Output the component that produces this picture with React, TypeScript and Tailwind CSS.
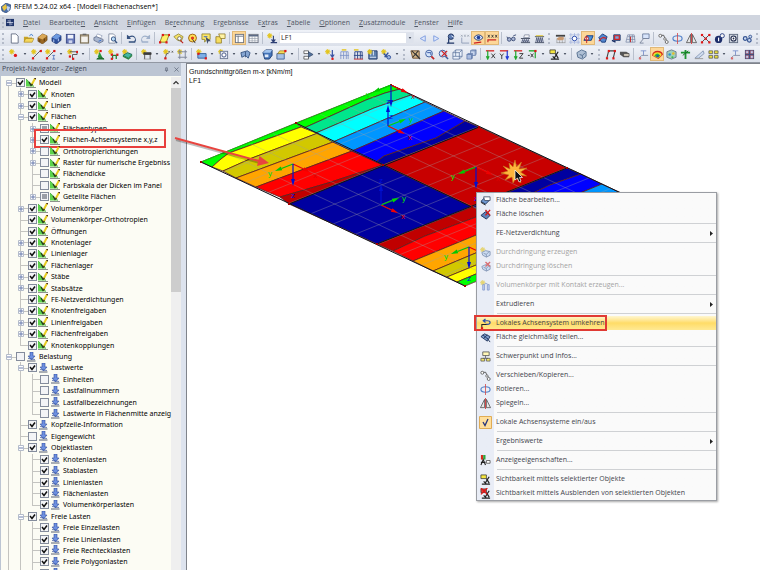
import React from "react";
import clsx from "clsx";

/* ---------- icons (12 x 12 grid) ---------- */

const node = (x: number, y: number, fill = "#e01818") => (
  <rect x={x - 1} y={y - 1} width="2.4" height="2.4" fill={fill} />
);

const spark = (
  <path d="M3 0v6M0 3h6M1 1l4 4M5 1L1 5" stroke="#e3c41c" strokeWidth="1.1" />
);

const icons: Record<string, React.ReactNode> = {
  // file toolbar
  newFile: <path d="M2.5 1h5l2.5 2.5V11h-7.5z" fill="#fff" stroke="#59637a" strokeWidth=".9" />,
  open: (
    <>
      <path d="M1 10V4h4l1 1h4v5z" fill="#c9a526" />
      <path d="M1 10l2-4h9l-2 4z" fill="#f5d75b" stroke="#94731a" strokeWidth=".5" />
      <path d="M7 3q2-3 4 0" fill="none" stroke="#2d72c8" />
    </>
  ),
  brownBlock: (
    <>
      <path d="M1 5l5-4 5 2v5l-5 4-5-3z" fill="#9a6824" stroke="#5d3908" strokeWidth=".6" />
      <path d="M1 5l5-4 5 2-5 4z" fill="#dba957" />
      <path d="M3 7v3M8 6v3" stroke="#5d3908" />
    </>
  ),
  blueBlock: (
    <>
      <path d="M1 5l5-4 5 2v5l-5 4-5-3z" fill="#2c4f9b" stroke="#152a62" strokeWidth=".6" />
      <path d="M1 5l5-4 5 2-5 4z" fill="#6f9be0" />
      <path d="M3 7v3M8 6v3" stroke="#c8dcff" />
    </>
  ),
  save: (
    <>
      <rect x="1.5" y="1.5" width="9" height="9.5" fill="#6577b8" stroke="#3b4a86" />
      <rect x="3" y="2" width="6" height="4" fill="#eef1fa" />
      <rect x="4" y="8" width="4" height="3" fill="#cfd6ee" />
    </>
  ),
  clipboard: (
    <>
      <rect x="1.5" y="2" width="9" height="9" fill="#b2a48c" stroke="#75684f" />
      <rect x="2.5" y="4" width="7" height="6" fill="#f4f2ee" />
      <path d="M4 1.5h4" stroke="#666" strokeWidth="1.5" />
    </>
  ),
  print: (
    <>
      <path d="M3 4l2-3 5 2-2 3z" fill="#fff" stroke="#7483a3" strokeWidth=".6" />
      <path d="M1 5l3-1 7 3v2l-4 2-6-3z" fill="#aab7cf" stroke="#4e5b78" strokeWidth=".7" />
      <path d="M6 9l3-1" stroke="#3268c8" />
    </>
  ),
  preview: (
    <>
      <path d="M2 1h5l2 2v8H2z" fill="#fff" stroke="#6d7891" strokeWidth=".8" />
      <circle cx="7" cy="6.5" r="2.3" fill="#b9dcf8" stroke="#33507f" />
      <path d="M8.5 8l2.5 3" stroke="#33507f" strokeWidth="1.4" />
    </>
  ),
  undo: <path d="M1 2v4.5h4.5L4 5q3-2 5 0t0 4H3v1.5h7q2-3 0-6T3.5 3.5z" fill="#35517f" />,
  redo: <path d="M11 2v4.5H6.5L8 5Q5 3 3 5t0 4h6v1.5H2Q0 7.5 2 4.5t6.5-1z" fill="#9fb0ca" />,
  plane: (
    <>
      <path d="M4 2h7L8 10H1z" fill="#fff06a" stroke="#8c8320" />
      {node(4, 2)}
      {node(11, 2)}
      {node(1, 10)}
      {node(8, 10)}
    </>
  ),
  zoomYellow: (
    <>
      <path d="M1 4l5-3 5 3-2 5-4-1z" fill="#f7e468" stroke="#8a7c25" strokeWidth=".8" />
      <circle cx="7" cy="6" r="2" fill="#fff" stroke="#555" strokeWidth=".8" />
      <path d="M8 8l3 3" stroke="#c02020" strokeWidth="1.3" />
    </>
  ),
  target: (
    <>
      <circle cx="6" cy="5.5" r="4.3" fill="#ffe258" stroke="#9a5f10" />
      <circle cx="6" cy="5.5" r="1.8" fill="#e03a1e" />
      <path d="M6 7l3 4" stroke="#333" />
    </>
  ),
  note: (
    <>
      <path d="M1 1h9v6H6l-2 3V7H1z" fill="#fbe66a" stroke="#87791e" strokeWidth=".8" />
      <path d="M5 4l6 5-3 0-1 3z" fill="#3e4c6b" />
      <path d="M3 4h4" stroke="#3f68c4" />
    </>
  ),
  folderDoc: (
    <>
      <path d="M1 4h6v7H1z" fill="#f6dd5f" stroke="#8b7420" strokeWidth=".8" />
      <path d="M4 1h7v5H6z" fill="#fff3a5" stroke="#8b7420" strokeWidth=".8" />
    </>
  ),
  table: (
    <>
      <rect x="1.5" y="1.5" width="9" height="9" fill="#fff" stroke="#6b7280" />
      <path d="M2 3.5h8M4.5 3v8" stroke="#6b7280" />
    </>
  ),
  grid: (
    <>
      <rect x="1" y="1.5" width="10" height="9" fill="#f8f8f8" stroke="#6b7280" />
      <path d="M1 3h10" stroke="#51607e" strokeWidth="1.5" />
      <path d="M1 6h10M1 8.5h10M4.5 3v8M7.5 3v8" stroke="#8992a3" strokeWidth=".6" />
    </>
  ),
  loadNew: (
    <>
      {spark}
      <path d="M7 3v6M5 7l2 3 2-3M4 10.5h7" fill="none" stroke="#2d3f74" strokeWidth="1.2" />
    </>
  ),
  prev: <path d="M9 3L3.5 6 9 9z" fill="#dfe8fb" stroke="#7c9be0" />,
  next: <path d="M3 3l5.5 3L3 9z" fill="#dfe8fb" stroke="#7c9be0" />,
  flag: (
    <>
      <circle cx="6.5" cy="4" r="3" fill="#5b79b0" stroke="#20345f" />
      <path d="M2 11h8M4 11V6" stroke="#1e3566" strokeWidth="1.3" />
      <path d="M7 3l3 2" stroke="#e8eefc" />
    </>
  ),
  values: (
    <>
      <path d="M2 2l2 2M4 2L2 4M5.5 2l2 2m0-2l-2 2M9 2l2 2m0-2L9 4" stroke="#8e97a8" strokeWidth=".7" />
      <path d="M3 5v6h8" fill="none" stroke="#8f9db8" />
    </>
  ),
  eye: (
    <>
      <path d="M1 5q5-6 10 0-5 6-10 0z" fill="#dbe6ff" stroke="#1d3670" />
      <circle cx="6" cy="5" r="2" fill="#1d3f9c" />
      <path d="M1 11l8-1" stroke="#d02020" strokeWidth="1.2" />
    </>
  ),
  xxx: (
    <>
      <path d="M1 2l2 3m0-3L1 5M5 2l2 3m0-3L5 5M9 2l2 3m0-3L9 5" stroke="#333" strokeWidth=".9" />
      <path d="M1 10V7.5h9" fill="none" stroke="#c82424" strokeWidth="1.2" />
    </>
  ),
  glasses: (
    <>
      <circle cx="3.5" cy="7" r="2" fill="#aab7d6" stroke="#3b4b75" />
      <circle cx="8" cy="6.5" r="2" fill="#aab7d6" stroke="#3b4b75" />
      <path d="M1 4l1 2M8 3l3-1" stroke="#3b4b75" />
    </>
  ),
  support: (
    <>
      <path d="M1 6h10M1 10.5h10" stroke="#444d60" />
      <path d="M2 10l1-3 1 3 1-3 1 3 1-3 1 3 1-3 1 3" fill="none" stroke="#3e486b" strokeWidth=".8" />
      <path d="M4 5l1-3h5v3z" fill="#f8f8f8" stroke="#6c7690" strokeWidth=".7" />
    </>
  ),
  supportPlain: (
    <>
      <path d="M1 4h10M1 10.5h10" stroke="#444d60" />
      <path d="M2 10l1-5 1 5 1-5 1 5 1-5 1 5 1-5 1 5" fill="none" stroke="#3e486b" strokeWidth=".8" />
      <path d="M2 3h8" stroke="#e3c41c" />
    </>
  ),
  hand: (
    <>
      <path d="M1 2h10v2H1z" fill="#444" />
      <path d="M2 6q3-3 8-1l-1 3H3z" fill="#c99a71" />
      <path d="M2 6v5M5 8v3M8 8v3M11 5v6M2 10.5h9" stroke="#888" strokeWidth=".6" />
    </>
  ),
  snap: (
    <>
      <path d="M2 0v12M6 0v12M10 0v12M0 2h12M0 6h12M0 10h12" stroke="#9fb0dc" strokeWidth=".7" />
      <circle cx="6" cy="6" r="2.5" fill="#fff" stroke="#2446ab" />
    </>
  ),
  modelA: (
    <>
      <path d="M1 8l3-5h7l-2 5z" fill="#4e94d8" stroke="#123b86" />
      <circle cx="4" cy="6" r="2" fill="#fff" stroke="#c02020" />
      <path d="M4 3v8" stroke="#c02020" />
    </>
  ),
  modelB: (
    <>
      <path d="M2 5l4-4 5 3-2 6H5z" fill="#5287cf" stroke="#173a7b" />
      <path d="M2 9q4-6 8-3" fill="none" stroke="#d32222" strokeWidth="1.3" />
    </>
  ),
  modelC: (
    <>
      <path d="M3 2h7v6H3z" fill="#7ba5dd" stroke="#1b3265" />
      <path d="M4 3h5v4H4z" fill="none" stroke="#d32222" strokeWidth="1.3" />
      <path d="M1 8l4 2" stroke="#172d63" strokeWidth="1.5" />
    </>
  ),
  mesh: (
    <>
      <path d="M1 10L3 2h7l1 8zM2 7h9M3 4h8M5 2v8M8 2v8" fill="none" stroke="#7a88a6" strokeWidth=".8" />
      <path d="M6 4v6" stroke="#c52222" />
    </>
  ),
  wireTag: (
    <>
      <path d="M4 1h7v5H4z" fill="#d7e4fb" stroke="#56688f" strokeWidth=".8" />
      <path d="M1 11l4-5h4M1 11h4" fill="none" stroke="#7c879d" />
    </>
  ),
  move: (
    <>
      <circle cx="2.5" cy="3" r="1.6" fill="#fff" stroke="#444" strokeWidth=".8" />
      <path d="M4 2.5q3-1 3 2l2 3" fill="none" stroke="#444" strokeWidth=".9" />
      <circle cx="7.5" cy="6.5" r="1.3" fill="#fff" stroke="#444" strokeWidth=".7" />
      <circle cx="9.5" cy="9.8" r="1.6" fill="#fff" stroke="#444" strokeWidth=".8" />
    </>
  ),
  rotate: (
    <>
      <ellipse cx="6" cy="6" rx="5" ry="3" fill="none" stroke="#4e7fc9" strokeWidth="1.2" />
      <path d="M6 0v12" stroke="#d34a4a" strokeWidth=".9" />
    </>
  ),
  mirror: (
    <>
      <path d="M5 1.5v9H.5zM7 1.5v9h4.5z" fill="#e7e7e7" stroke="#444" strokeWidth=".8" />
      <path d="M6 0v12" stroke="#d02c2c" strokeWidth=".9" />
    </>
  ),
  cross: (
    <>
      <path d="M1.5 1.5l9 9M10.5 1.5l-9 9" stroke="#444" />
      {node(2, 2)}
      {node(10, 2)}
      {node(6, 6)}
      {node(2, 10)}
      {node(10, 10)}
    </>
  ),
  info: (
    <>
      <circle cx="5" cy="7" r="4" fill="#1e2f6b" />
      <circle cx="9" cy="3" r="2.3" fill="#f6f6f6" stroke="#263c80" />
      <path d="M5 5v4" stroke="#fff" strokeWidth="1.3" />
    </>
  ),
  camera: (
    <>
      <rect x="1.5" y="1.5" width="9" height="9" fill="#cfd5df" stroke="#636e82" />
      <circle cx="6" cy="6" r="2.8" fill="#fff" stroke="#1d2748" strokeWidth="1.2" />
      <circle cx="6" cy="6" r="1" fill="#1d2748" />
    </>
  ),
  gears: (
    <>
      <circle cx="3.5" cy="6" r="2" fill="#cddcf4" stroke="#345391" strokeWidth="1.3" />
      <circle cx="8" cy="8" r="2" fill="#cddcf4" stroke="#345391" strokeWidth="1.3" />
      <circle cx="9" cy="4" r="1.6" fill="#cddcf4" stroke="#345391" />
    </>
  ),

  // model toolbar
  node: (
    <>
      {spark}
      <circle cx="7" cy="7" r="1.8" fill="#e01818" />
    </>
  ),
  line: (
    <>
      {spark}
      <path d="M1 11L11 1" stroke="#555" />
      {node(2, 10)}
      {node(10.5, 2)}
    </>
  ),
  lineDim: (
    <>
      {spark}
      <path d="M1 11L10 2" stroke="#555" />
      {node(2, 10)}
      {node(10, 2)}
      <path d="M8 7h3M9.5 7v4M8 11h3" stroke="#3c62b8" strokeWidth=".8" />
    </>
  ),
  polyline: (
    <>
      {spark}
      <path d="M3 3h8v3H6v5" fill="none" stroke="#555" />
      {node(11, 3)}
      {node(3, 8)}
      {node(6.5, 10.5)}
    </>
  ),
  nodeSupport: (
    <>
      {spark}
      <path d="M6 3l3 6H4z" fill="#27963c" />
      <path d="M3 11q4-4 8 0z" fill="#1c6e2c" stroke="#1c6e2c" />
      {node(7, 2)}
    </>
  ),
  lineSupport: (
    <>
      {spark}
      <path d="M4 7h7M5 7v4M9 7v4" stroke="#1f8634" strokeWidth="1.4" />
      {node(4, 6)}
      {node(10, 6)}
      {node(4, 10.5)}
    </>
  ),
  surfSupport: (
    <>
      {spark}
      <path d="M1 7l5-3 5 2-4 4z" fill="#43b9a0" stroke="#1b6a4c" />
      <path d="M1 8l6 3 4-4" fill="none" stroke="#24843c" strokeWidth="1.3" />
    </>
  ),
  section: (
    <>
      {spark}
      <path d="M3 4h8v2H3zM4 6v5M10 6v5" fill="#3c3c3c" stroke="#3c3c3c" strokeWidth=".9" />
      <path d="M3 11h8" stroke="#888" strokeWidth=".7" />
    </>
  ),
  label: (
    <>
      {spark}
      <path d="M2 11l2-6h2" fill="none" stroke="#555" />
      <path d="M6 2l1.5 2M7.5 2L6 4M9.5 2L11 4M11 2L9.5 4" stroke="#555" strokeWidth=".8" />
      {node(2.5, 10)}
    </>
  ),
  frame: (
    <>
      {spark}
      <path d="M3 1v10M9 1v10M1 3h10M1 9h10" stroke="#7d8698" />
    </>
  ),
  rectNew: (
    <>
      {spark}
      <path d="M2 5h9v5H2z" fill="#7eafe8" stroke="#34629c" />
      {node(2.5, 5)}
      {node(10.5, 10)}
    </>
  ),
  opening: (
    <>
      {spark}
      <rect x="2.5" y="2.5" width="8" height="8" fill="#e8edf8" stroke="#6c7894" />
      <circle cx="6.5" cy="6.5" r="2.3" fill="#fff" stroke="#3a4d7d" />
    </>
  ),
  tube: (
    <>
      <path d="M1 4l7-2 3 2-2 6-3-3-4 2z" fill="#86a6d2" stroke="#395783" />
      <path d="M6 3v6" stroke="#395783" />
    </>
  ),
  box: (
    <>
      <path d="M1 4l3-3h7v6l-3 4H3z" fill="#4373b8" stroke="#1f3e73" />
      <path d="M1 4l3-3h7L9 4z" fill="#a2c4ee" />
      <path d="M3 6h4v3H3z" fill="#dfeafa" />
    </>
  ),
  solidNew: (
    <>
      <path d="M1 5h8v6H1z" fill="#a7c1e6" stroke="#466797" />
      <path d="M2 5l2-3h7L9 5z" fill="#f5db57" stroke="#8e761c" strokeWidth=".7" />
      {node(10, 2)}
    </>
  ),
  member: (
    <>
      <path d="M1 2h5v3H1zM1 8h5v3H1z" fill="#fff" stroke="#444" strokeWidth=".8" />
      <path d="M6 3l5 3-5 3z" fill="#54739c" stroke="#2b3f60" strokeWidth=".7" />
    </>
  ),
  load: (
    <>
      {spark}
      <path d="M8 1v7M6 6l2 3 2-3" fill="none" stroke="#3651a2" strokeWidth="1.3" />
      {node(8, 10.5)}
    </>
  ),
  loadMesh: (
    <>
      <path d="M2 3h8v8M2 3v8M5 3v8M8 3v8M1 7h10" fill="none" stroke="#7d92c6" strokeWidth=".9" />
      <path d="M3 1h5" stroke="#e3c41c" strokeWidth="1.5" />
    </>
  ),
  loadMeshDark: (
    <>
      <path d="M2 3h8v8M2 3v8M5 3v8M8 3v8M1 7h10" fill="none" stroke="#2e4788" />
      <path d="M1 1h5" stroke="#e3c41c" strokeWidth="1.5" />
      <path d="M1 11h10" stroke="#c42a2a" />
    </>
  ),
  loadSolid: (
    <>
      <path d="M2 2h9v9H2z" fill="#5d7fae" stroke="#223a68" />
      <path d="M4 2v5M7 2v5M3 9h7" stroke="#e2ecfb" />
      {spark}
    </>
  ),
  loadFree: (
    <>
      {spark}
      <path d="M3 5l5 5M4 9l4-5" stroke="#35539b" strokeWidth="1.6" />
      <circle cx="8.5" cy="9" r="2" fill="#98b1de" stroke="#35539b" />
    </>
  ),
  picker: (
    <>
      <path d="M1 2h9v8H3z" fill="#d6b98c" stroke="#6b4b2d" />
      <path d="M2 2l8 8M9 2L3 9M6 5l5 6" stroke="#343434" strokeWidth="1.2" />
    </>
  ),
  zoomIn: (
    <>
      <circle cx="5.5" cy="5" r="3.7" fill="#d6e6fb" stroke="#3a5b9c" />
      <path d="M8 8l3 3" stroke="#c02626" strokeWidth="1.8" />
      <path d="M3.5 4h4v2.5" stroke="#2f4fa0" />
    </>
  ),
  zoomOff: (
    <>
      <circle cx="5" cy="5" r="3.7" fill="#d6e6fb" stroke="#3a5b9c" />
      <path d="M8 8l3 3" stroke="#3a5b9c" strokeWidth="1.6" />
      <path d="M4 2l6 6M10 2L4 8" stroke="#d02020" strokeWidth="1.3" />
    </>
  ),
  cube: (
    <path d="M1 4l3-3h7v7l-3 3H1zM1 4h7l3-3M8 4v7M4 1v7H1M4 8h7" fill="#eaf1fb" stroke="#587099" strokeWidth=".8" />
  ),
  cubes: (
    <>
      <path d="M5 2l1-1h5v5l-1 1H5zM5 2h5v5M10 2l1-1" fill="#c9d6ee" stroke="#5b74a5" strokeWidth=".8" />
      <path d="M1 6l1-1h5v5l-1 1H1zM1 6h5v5M6 6l1-1" fill="#a9bce0" stroke="#5b74a5" strokeWidth=".8" />
    </>
  ),
  axX: (
    <>
      <path d="M1 2h9" stroke="#d42020" strokeWidth="1.4" />
      <path d="M3 2v8M1.5 8L3 11l1.5-3" fill="none" stroke="#21a82e" strokeWidth="1.3" />
      <path d="M7 5l4 5M11 5l-4 5" stroke="#333" />
    </>
  ),
  axY: (
    <>
      <path d="M1 2h9" stroke="#d42020" strokeWidth="1.4" />
      <path d="M9 2v8M7.5 8L9 11l1.5-3" fill="none" stroke="#2038d8" strokeWidth="1.3" />
      <path d="M1 5l2 2.5L5 5M3 7.5V11" fill="none" stroke="#333" />
    </>
  ),
  axZ: (
    <>
      <path d="M1 2h9" stroke="#d42020" strokeWidth="1.4" />
      <path d="M3 2v8M1.5 8L3 11l1.5-3" fill="none" stroke="#21a82e" strokeWidth="1.3" />
      <path d="M7 5h4l-4 5h4" fill="none" stroke="#333" />
    </>
  ),
  axNeg: (
    <>
      <path d="M2 2h8" stroke="#21a82e" strokeWidth="1.5" />
      <path d="M9 2v8" stroke="#21a82e" strokeWidth="1.3" />
      <path d="M1 7h2M4 5l3 4M7 5L4 9" stroke="#333" />
      {node(9, 2)}
    </>
  ),
  visibility: (
    <>
      <path d="M1 1h6v4H1z" fill="#f4e53e" stroke="#333" strokeWidth=".8" />
      <path d="M2 11h9M5 11l5-8M7 5l3 5M4 8l3 3" stroke="#222" strokeWidth="1.3" />
    </>
  ),
  visibilityOff: (
    <>
      <path d="M1 1h6v4H1z" fill="#e8443c" stroke="#333" strokeWidth=".8" />
      <path d="M2 11h9M5 11l5-8M7 5l3 5M4 8l3 3" stroke="#222" strokeWidth="1.3" />
      <path d="M1 0l7 7M8 0L1 7" stroke="#e01818" strokeWidth="1.4" />
    </>
  ),
  solid: (
    <>
      <path d="M1 4l5-3 5 2v5l-4 3-5-2z" fill="#aebfd4" stroke="#55708f" />
      <path d="M4 6l3 1 3-3M7 7v3" fill="none" stroke="#55708f" />
    </>
  ),
  portal: (
    <>
      <path d="M2 10L4 2h7L9 10" fill="none" stroke="#444" strokeWidth="1.2" />
      {node(4, 2)}
      {node(10.5, 2)}
      {node(2, 10)}
      {node(9, 10)}
    </>
  ),
  beam: (
    <>
      <path d="M1 3h7l3 2v4H5L1 6z" fill="#555" />
      <path d="M5 5h6v3H5z" fill="#d8cfbf" stroke="#333" strokeWidth=".6" />
    </>
  ),
  resultLine: (
    <>
      <path d="M3 2h6M6 2v5" stroke="#7d93cd" />
      <path d="M1 10l3-3h7" fill="none" stroke="#8692a8" />
      {node(2, 10, "#da6a6a")}
    </>
  ),
  rainbow: (
    <>
      <path d="M0 7q1-5 6-5t6 4l-5 5z" fill="#d62a1c" />
      <path d="M1 7q1-3.5 5-3.5t4.5 3L7 10z" fill="#f3dd2a" />
      <path d="M2.5 7.5Q4 5 6.5 5L9 7 7 9.5z" fill="#2bb43e" />
      <path d="M4.5 8Q5 6.5 7 6.5L7.5 8 6.5 9z" fill="#2444c9" />
    </>
  ),
  isoCube: (
    <>
      <path d="M1 3l5-2 5 2v6l-5 2-5-2z" fill="#9fd0b9" stroke="#6e7c8c" />
      <circle cx="4" cy="6" r="1.4" fill="#2c8fd6" />
      <circle cx="8" cy="5" r="1.4" fill="#e6bb2a" />
      <circle cx="7" cy="9" r="1.2" fill="#42b64c" />
    </>
  ),
  greenCross: (
    <>
      <path d="M6 1v10M1 4h10" stroke="#1e9430" strokeWidth="2" />
      <path d="M3 7l6-5" stroke="#145f20" />
    </>
  ),
  sectionCut: (
    <>
      <path d="M1 10l9-8 1 3-6 5z" fill="#cfdcef" stroke="#7488a8" strokeWidth=".8" />
      <path d="M1 10.5h9" stroke="#9a9a9a" />
    </>
  ),
  panels: (
    <path d="M1 2h4v3H1zM7 2h4v3H7zM1 7h4v3H1zM7 7h4v3H7z" fill="#e8dd3a" stroke="#555" strokeWidth=".8" />
  ),
  windows: (
    <>
      <rect x="1" y="1" width="10" height="10" fill="#3d4e7e" />
      <path d="M2 2h3v3H2zM7 2h3v3H7zM2 7h3v3H2zM7 7h3v3H7z" fill="#b9cdf3" stroke="#c94747" strokeWidth=".5" />
    </>
  ),

  // context menu
  editSurface: (
    <>
      <path d="M1 7l4-4 5 3-4 4z" fill="#6f97ce" stroke="#1f3358" />
      <path d="M4 2h7v4H5z" fill="#fff" stroke="#3e4b66" strokeWidth=".9" />
      <path d="M1 8l5 3" stroke="#222" />
    </>
  ),
  deleteSurface: (
    <>
      <path d="M1 7l5-4 5 4-4 4z" fill="#5d83bb" stroke="#1f3358" />
      <path d="M6 1l5 6M11 1L6 7" stroke="#d01c1c" strokeWidth="1.5" />
    </>
  ),
  intersect: (
    <>
      {spark}
      <path d="M2 6l4-2 5 1v4l-4 2-4-2z" fill="#b9d2f0" stroke="#46638f" />
      <path d="M4 7l3 1 3-3M7 8v3" fill="none" stroke="#46638f" />
    </>
  ),
  intersectOff: (
    <>
      <path d="M2 6l4-2 5 1v4l-4 2-4-2z" fill="#b9d2f0" stroke="#46638f" />
      <path d="M4 7l3 1 3-3M7 8v3" fill="none" stroke="#46638f" />
      <path d="M6 1l5 5M11 1L6 6" stroke="#d01c1c" strokeWidth="1.5" />
    </>
  ),
  contact: (
    <>
      {spark}
      <path d="M3 5h2v6H3zM8 5h2v6H8zM5 4h3" fill="#a9bdf0" stroke="#4363b3" strokeWidth=".9" />
    </>
  ),
  reverse: (
    <>
      <path d="M4 3h4q3 0 3 2t-3 2H6M6 1L3.5 3 6 5" fill="none" stroke="#2a4fa8" strokeWidth="1.3" />
      <path d="M2 11V7h5" fill="none" stroke="#222" strokeWidth="1.1" />
      {node(2, 11)}
    </>
  ),
  divide: (
    <>
      <path d="M1 5l4-3 6 3-3 5z" fill="#7b9ccb" stroke="#23375f" />
      <path d="M3 3l6 5M8 3L4 7M8 7l3 4" stroke="#23375f" />
    </>
  ),
  centroid: (
    <>
      <path d="M3 1h7v4H3z" fill="#fff7b8" stroke="#555" strokeWidth=".9" />
      <path d="M6 5v3M3 8h6M1 8h4v3H1zM7 8h4v3H7z" fill="#efe36a" stroke="#555" strokeWidth=".8" />
    </>
  ),
  display: (
    <>
      <rect x="1" y="0" width="2.5" height="5" fill="#d62a1c" />
      <rect x="3.5" y="0" width="2.5" height="5" fill="#2ba63e" />
      <path d="M1 11l2.5-6L6 11M1 8h5" fill="none" stroke="#222" strokeWidth="1.2" />
      <path d="M7 6h4v3H7z" fill="#fff" stroke="#555" strokeWidth=".9" />
    </>
  ),
};

const Icon = ({ name, className = "size-3" }: { name: string; className?: string }) => (
  <svg viewBox="0 0 12 12" fill="none" className={clsx("shrink-0", className)}>
    {icons[name]}
  </svg>
);

/* ---------- toolbars ---------- */

// "|" separator, "::" grip, "v" drop-down arrow, "*" prefix = pressed
const fileTools = [
  "::", "newFile", "open", "brownBlock", "blueBlock", "save", "clipboard", "print", "preview",
  "|", "undo", "redo", "|", "plane", "zoomYellow", "target", "note", "folderDoc",
  "|", "*table", "grid", "|", "loadNew", "combo", "prev", "next", "flag", "values", "*eye", "*xxx",
  "|", "glasses", "support", "supportPlain", "::", "hand", "snap", "*modelA", "modelB", "modelC", "mesh", "wireTag",
  "|", "move", "rotate", "mirror", "cross", "info", "camera", "gears", "::",
];

const modelTools = [
  "::", "node", "v", "line", "lineDim", "v", "polyline", "v", "|", "nodeSupport", "lineSupport", "surfSupport",
  "|", "section", "v", "label", "frame", "|", "rectNew", "v", "opening", "v", "tube", "v", "box", "solidNew", "v",
  "|", "member", "v", "load", "loadMesh", "loadMeshDark", "loadSolid", "loadFree", "v",
  "::", "picker", "zoomIn", "zoomOff", "cube", "cubes", "|", "axX", "axY", "axZ", "axNeg", "v", "visibility", "v",
  "|", "solid", "v", "::", "portal", "beam", "|", "resultLine", "*rainbow", "isoCube", "greenCross", "sectionCut",
  "panels", "v", "resultLine", "windows",
];

const Caret = () => (
  <svg viewBox="0 0 4 3" className="h-[2px] w-[4px]">
    <path d="M0 0h4L2 3z" fill="#4b5363" />
  </svg>
);

const LoadCaseSelect = () => (
  <div className="relative mr-px w-[135px] shrink-0">
    <select
      aria-label="Lastfall"
      className="block h-3 w-full appearance-none border border-[#dfe3ec] bg-white pl-px text-[7px] leading-[10px] text-[#222]"
    >
      <option>LF1</option>
    </select>
    <span className="pointer-events-none absolute inset-y-px right-px flex w-[7px] items-center justify-center bg-[#dde2ec]">
      <Caret />
    </span>
  </div>
);

const Toolbar = ({ tools, label }: { tools: string[]; label: string }) => (
  <div
    role="toolbar"
    aria-label={label}
    className="flex h-4 shrink-0 items-center overflow-hidden bg-linear-to-b from-[#eff2f8] to-[#dbe0ea]"
  >
    {tools.map((tool, i) => {
      if (tool === "|") return <span key={i} className="mx-[2px] h-3 w-px shrink-0 bg-[#b9c0cd]" />;
      if (tool === "::")
        return <span key={i} className="mr-[3px] ml-[2px] h-[11px] shrink-0 border-l-2 border-dotted border-[#b4bbc9]" />;
      if (tool === "v")
        return (
          <button key={i} type="button" aria-label="Mehr" className="flex h-4 w-2 shrink-0 items-center justify-center">
            <Caret />
          </button>
        );
      if (tool === "combo") return <LoadCaseSelect key={i} />;
      const pressed = tool.startsWith("*");
      const name = tool.replace("*", "");
      return (
        <button
          key={i}
          type="button"
          aria-label={name}
          className={clsx(
            "flex h-[14px] w-[14px] shrink-0 items-center justify-center",
            pressed && "border border-[#e0b878] bg-[#fdd798]"
          )}
        >
          <Icon name={name} className="size-[11px]" />
        </button>
      );
    })}
  </div>
);

/* ---------- menu bar ---------- */

// label and index of the underlined letter
const menus: [string, number][] = [
  ["Datei", 0],
  ["Bearbeiten", 9],
  ["Ansicht", 0],
  ["Einfügen", 0],
  ["Berechnung", 2],
  ["Ergebnisse", -1],
  ["Extras", 1],
  ["Tabelle", 0],
  ["Optionen", 0],
  ["Zusatzmodule", 0],
  ["Fenster", 0],
  ["Hilfe", 0],
];

const MenuBar = () => (
  <nav className="flex h-[15px] shrink-0 items-center gap-[9px] bg-[#d0d5df] text-[7px] text-[#4f5664]">
    <span className="flex items-center">
      <span className="mx-[2px] h-[11px] border-l-2 border-dotted border-[#b4bbc9]" />
      <svg viewBox="0 0 10 9" className="h-[9px] w-2">
        <path d="M0 0h10v9H0z" fill="#20356b" />
        <path d="M1 4.5h8M5 1v7M2 2.5h2M6 6.5h2" stroke="#e6ecfa" strokeWidth=".9" />
      </svg>
    </span>
    {menus.map(([label, u]) => (
      <button key={label} type="button" className="leading-[15px] whitespace-nowrap">
        {u < 0 ? (
          label
        ) : (
          <>
            {label.slice(0, u)}
            <u>{label[u]}</u>
            {label.slice(u + 1)}
          </>
        )}
      </button>
    ))}
  </nav>
);

/* ---------- navigator ---------- */

type Row = {
  level: number;
  label: string;
  state?: "on" | "off" | "mixed";
  box?: "+" | "-";
  load?: boolean;
};

const row = (level: number, label: string, state: Row["state"] = "on", box?: Row["box"], load = false): Row => ({
  level,
  label,
  state,
  box,
  load,
});

const rows: Row[] = [
  row(0, "Modell", "on", "-"),
  row(1, "Knoten", "on", "+"),
  row(1, "Linien", "on", "+"),
  row(1, "Flächen", "on", "-"),
  row(2, "Flächentypen", "mixed", "+"),
  row(2, "Flächen-Achsensysteme x,y,z", "on", "+"),
  row(2, "Orthotropierichtungen", "off", "+"),
  row(2, "Raster für numerische Ergebniss", "off", "+"),
  row(2, "Flächendicke", "off"),
  row(2, "Farbskala der Dicken im Panel", "off"),
  row(2, "Geteilte Flächen", "mixed", "+"),
  row(1, "Volumenkörper", "on", "+"),
  row(1, "Volumenkörper-Orthotropien"),
  row(1, "Öffnungen"),
  row(1, "Knotenlager", "on", "+"),
  row(1, "Linienlager", "on", "+"),
  row(1, "Flächenlager"),
  row(1, "Stäbe", "on", "+"),
  row(1, "Stabsätze", "on", "+"),
  row(1, "FE-Netzverdichtungen"),
  row(1, "Knotenfreigaben", "on", "+"),
  row(1, "Linienfreigaben", "on", "+"),
  row(1, "Flächenfreigaben", "on", "+"),
  row(1, "Knotenkopplungen"),
  row(0, "Belastung", "off", "-", true),
  row(1, "Lastwerte", "on", "-", true),
  row(2, "Einheiten", "off", undefined, true),
  row(2, "Lastfallnummern", "off", undefined, true),
  row(2, "Lastfallbezeichnungen", "off", undefined, true),
  row(2, "Lastwerte in Flächenmitte anzeig", "off", undefined, true),
  row(1, "Kopfzeile-Information", "on", undefined, true),
  row(1, "Eigengewicht", "off", undefined, true),
  row(1, "Objektlasten", "on", "-", true),
  row(2, "Knotenlasten", "on", undefined, true),
  row(2, "Stablasten", "on", undefined, true),
  row(2, "Linienlasten", "on", undefined, true),
  row(2, "Flächenlasten", "on", undefined, true),
  row(2, "Volumenkörperlasten", "on", undefined, true),
  row(1, "Freie Lasten", "on", "-", true),
  row(2, "Freie Einzellasten", "on", undefined, true),
  row(2, "Freie Linienlasten", "on", undefined, true),
  row(2, "Freie Rechtecklasten", "on", undefined, true),
  row(2, "Freie Polygonlasten", "on", undefined, true),
  row(2, "", "on", undefined, true),
];

// does the guide line of `level` carry on below row i?
const continues = (i: number, level: number) => {
  for (let k = i + 1; k < rows.length; k++) {
    if (rows[k].level < level) return false;
    if (rows[k].level === level) return true;
  }
  return true;
};

const ModelGlyph = () => (
  <svg viewBox="0 0 10 10" className="size-[10px] shrink-0">
    <path d="M0 1l8 7.5H0z" fill="#5cd44c" />
    <path d="M0 1l8 7.5" stroke="#2c9a2c" strokeWidth=".7" />
    <path d="M9 .5L5.5 7" stroke="#e8cc20" strokeWidth="2" />
    <path d="M8.5 0L10 1" stroke="#4a2f20" strokeWidth="1.5" />
    <path d="M3 4l2 3.5 1.500-1.500" fill="none" stroke="#26331c" strokeWidth="1.2" />
    <path d="M0 9.5h10" stroke="#8d938d" />
  </svg>
);

const LoadGlyph = () => (
  <svg viewBox="0 0 10 10" className="size-[10px] shrink-0">
    <path d="M4 0h3v4h2L5.5 8 2 4h2z" fill="#6d8fe0" stroke="#2f4c9c" strokeWidth=".6" />
    <path d="M1 9h8.5" stroke="#596075" />
    <path d="M2 6.5l7 1" stroke="#2f4c9c" strokeWidth=".7" />
  </svg>
);

const TreeRow = ({ item, index }: { item: Row; index: number }) => (
  <li className="relative flex items-stretch pl-[2px]">
    {Array.from({ length: item.level }, (_, l) => (
      <span key={l} className="w-3 shrink-0 pl-[5px]">
        {continues(index, l) && <span className="block h-full border-l border-[#c4c4c0]" />}
      </span>
    ))}
    <span className="relative w-[13px] shrink-0">
      {index > 0 && <span className="absolute top-0 left-[5px] h-1/2 border-l border-[#c4c4c0]" />}
      {continues(index, item.level) && (
        <span className="absolute bottom-0 left-[5px] h-1/2 border-l border-[#c4c4c0]" />
      )}
      <span className="absolute top-1/2 left-[5px] w-2 border-t border-[#c4c4c0]" />
      {item.box && (
        <button
          type="button"
          aria-label={item.box === "+" ? "Aufklappen" : "Zuklappen"}
          className="absolute top-[3px] left-[3px] size-[6px]"
        >
          <svg viewBox="0 0 6 6" className="block size-[6px]">
            <path d="M.5.5h5v5h-5z" fill="#fff" stroke="#b4bccb" />
            <path d={item.box === "+" ? "M1 3h4M3 1v4" : "M1 3h4"} stroke="#5b70a5" strokeWidth=".9" />
          </svg>
        </button>
      )}
    </span>
    <label className="flex min-w-0 items-center whitespace-nowrap">
      <span className="grid shrink-0">
        <input
          type="checkbox"
          defaultChecked={item.state === "on"}
          className="peer col-start-1 row-start-1 size-[9px] appearance-none border border-[#848c9c] bg-[#f3f4f6]"
        />
        <svg
          viewBox="0 0 9 9"
          className="pointer-events-none invisible col-start-1 row-start-1 size-[9px] peer-checked:visible"
        >
          <path d="M2 4l2 2.5L7 2.5" fill="none" stroke="#111" strokeWidth="1.5" />
        </svg>
        {item.state === "mixed" && (
          <span className="pointer-events-none col-start-1 row-start-1 m-[2px] size-[5px] bg-[#9a9ea6]" />
        )}
      </span>
      <span className="mr-[3px] ml-px">{item.load ? <LoadGlyph /> : <ModelGlyph />}</span>
      <span>{item.label}</span>
    </label>
    {item.label.includes("x,y,z") && (
      <span className="pointer-events-none absolute -top-[5px] -bottom-[3px] left-[33px] w-[132px] border-2 border-[#e8403c]" />
    )}
  </li>
);

const Navigator = () => (
  <aside className="flex w-[186px] shrink-0 flex-col border-r-[5px] border-[#dde3ee] bg-[#bcc5d3] pl-px">
    <header className="flex h-[13px] shrink-0 items-center pr-[2px] text-[7px] text-[#3d4452]">
      <h2 className="grow pl-px">Projekt-Navigator - Zeigen</h2>
      <button type="button" aria-label="Anheften" className="mr-[5px]">
        <svg viewBox="0 0 6 6" className="size-[5px]">
          <path d="M1 4h4M2 4V1h2v3M3 4v2" fill="none" stroke="#596274" strokeWidth=".8" />
        </svg>
      </button>
      <button type="button" aria-label="Schließen">
        <svg viewBox="0 0 6 6" className="size-[5px]">
          <path d="M.5.5l5 5M5.5.5l-5 5" stroke="#596274" strokeWidth=".8" />
        </svg>
      </button>
    </header>
    <div className="flex min-h-0 grow bg-[#fcfcf4] pt-px">
      <ul className="grid h-[502px] min-w-0 grow auto-rows-fr font-['Noto_Sans',sans-serif] text-[7px] leading-[11px] font-normal text-black">
        {rows.map((item, i) => (
          <TreeRow key={i} item={item} index={i} />
        ))}
      </ul>
      <div className="flex w-[10px] shrink-0 flex-col bg-[#efefef]">
        <svg viewBox="0 0 10 10" className="h-[11px] w-[10px]">
          <path d="M2.5 6.5L5 4l2.5 2.5" fill="none" stroke="#333" strokeWidth="1.2" />
        </svg>
        <div className="h-[204px] bg-[#cdcdcd]" />
      </div>
    </div>
  </aside>
);

/* ---------- result surface ---------- */

const bands: [string, string][] = [
  // left panel
  ["#00ff00", "201,162 296,123 301,127 229,153 221,159 212,167"],
  ["#ffff00", "212,167 221,159 229,153 301,127 318,133 252,158 223,171"],
  ["#d2c800", "223,171 252,158 318,133 333,142 236,178"],
  ["#ffa500", "236,178 333,142 352,151 256,187"],
  ["#ff0000", "256,187 352,151 375,161 383,165 328,183 280,197"],
  ["#c00000", "280,197 328,183 383,165 289,204"],
  // upper panel
  ["#00ff00", "296,123 391,85 400,89 385,93 366,100 304,128"],
  ["#00e68c", "304,128 366,100 385,93 400,89 411,95 374,108 316,133"],
  ["#00ffff", "316,133 374,108 411,95 425,102 333,142"],
  ["#0096ff", "333,142 425,102 444,111 352,151"],
  ["#0000ff", "352,151 444,111 465,121 448,131 436,138 384,156 376,162"],
  ["#0000a0", "376,162 384,156 436,138 448,131 465,121 479,127 383,165"],
  // middle
  ["#c80000", "383,165 479,127 567,168 472,207"],
  ["#0000a0", "289,204 383,165 472,207 377,244"],
  // lower panel
  ["#c00000", "377,244 472,207 487,213 425,236 393,251"],
  ["#ff0000", "393,251 425,236 487,213 508,222 413,261"],
  ["#ffa500", "413,261 508,222 528,231 433,271"],
  ["#d2c800", "433,271 528,231 542,238 447,277"],
  ["#ffff00", "447,277 542,238 552,242 457,282"],
  ["#00ff00", "457,282 552,242 560,247 465,286"],
  // right panel
  ["#0000a0", "472,207 567,168 581,174 550,185 495,211"],
  ["#0000ff", "495,211 550,185 581,174 602,184 507,223"],
  ["#0096ff", "507,223 602,184 621,193 526,232"],
  ["#00ffff", "526,232 621,193 655,209 560,247"],
];

const steps = Array.from({ length: 13 }, (_, i) => i);

const meshPath =
  steps.map((i) => `M${201 + i * 22} ${162 + (i * 31) / 3}L${391 + i * 22} ${85 + (i * 31) / 3}`).join("") +
  steps
    .slice(0, 9)
    .map((i) => `M${201 + (i * 95) / 4} ${162 - (i * 77) / 8}L${465 + (i * 95) / 4} ${286 - (i * 77) / 8}`)
    .join("");

const corners = [
  [201, 162], [296, 123], [391, 85], [289, 204], [383, 165], [479, 127],
  [377, 244], [472, 207], [567, 168], [465, 286],
];

type AxisProps = { x: number; y: number; up?: boolean };

const arrow = (x: number, y: number, dx: number, dy: number, color: string) => {
  const len = Math.hypot(dx, dy);
  const ux = dx / len;
  const uy = dy / len;
  const tx = x + dx;
  const ty = y + dy;
  const bx = tx - ux * 7;
  const by = ty - uy * 7;
  return (
    <>
      <path d={`M${x} ${y}L${bx} ${by}`} stroke={color} strokeWidth="1.2" />
      <path d={`M${tx} ${ty}L${bx - uy * 2} ${by + ux * 2}L${bx + uy * 2} ${by - ux * 2}z`} fill={color} />
    </>
  );
};

const Axis = ({ x, y, up }: AxisProps) => (
  <g fontSize="8">
    {arrow(x, y, 17, 8, "#f00000")}
    {up ? arrow(x, y, 18, -7, "#00d800") : arrow(x, y, -18, 7, "#00c800")}
    {arrow(x, y, 0, up ? -21 : 22, "#0010d0")}
    <text x={x + 20} y={y + 14} fill="#e00000">x</text>
    <text x={up ? x + 21 : x - 25} y={up ? y - 4 : y + 12} fill="#00e000">y</text>
    <text x={x - 2} y={up ? y - 22 : y + 34} fill="#0010e0">z</text>
  </g>
);

const ResultSurface = () => (
  <svg
    viewBox="187 64 573 506"
    className="h-[506px] w-[573px] shrink-0 font-['Liberation_Sans']"
    aria-label="Grundschnittgrößen"
  >
    {bands.map(([fill, points], i) => (
      <polygon key={i} points={points} fill={fill} stroke="#5a2020" strokeWidth=".8" />
    ))}
    <path d={meshPath} stroke="#a0a0a0" strokeOpacity=".5" strokeWidth=".7" />
    <path
      d="M391 85L655 209M201 162L465 286M296 123L472 207M289 204L479 127M377 244L567 168"
      stroke="#101018"
      strokeWidth="1"
    />
    <path d="M201 162L391 85" stroke="#00d000" />
    {corners.map(([x, y]) => (
      <rect key={`${x}-${y}`} x={x - 1} y={y - 1} width="2" height="2" fill="#a00000" />
    ))}
    <Axis x={391} y={85} />
    <Axis x={388} y={126} up />
    <Axis x={293} y={164} />
    <Axis x={381} y={205} up />
    <Axis x={476} y={167} />
    <Axis x={469} y={247} />
    <path
      d="M515 160l1.5 7 5-5-2.5 7 8-1-6.5 4 6 4-7.5-1 2 8-5-5-3 5-1-6-7 3 4-5-8-2 7-2-5-5 7 3-1-6 4 4z"
      fill="#ffb53c"
      stroke="#c47a1c"
      strokeWidth=".6"
    />
    <path d="M515 170v10l2.5-2 1.5 4 2-1-1.5-3.5h3z" fill="#111" stroke="#fff" strokeWidth=".7" />
  </svg>
);

/* ---------- context menu ---------- */

type Entry = {
  label: string;
  icon?: string;
  disabled?: boolean;
  sub?: boolean;
  checked?: boolean;
  active?: boolean;
};

const groups: Entry[][] = [
  [
    { label: "Fläche bearbeiten...", icon: "editSurface" },
    { label: "Fläche löschen", icon: "deleteSurface" },
  ],
  [{ label: "FE-Netzverdichtung", sub: true }],
  [
    { label: "Durchdringung erzeugen", icon: "intersect", disabled: true },
    { label: "Durchdringung löschen", icon: "intersectOff", disabled: true },
  ],
  [{ label: "Volumenkörper mit Kontakt erzeugen...", icon: "contact", disabled: true }],
  [{ label: "Extrudieren", sub: true }],
  [
    { label: "Lokales Achsensystem umkehren", icon: "reverse", active: true },
    { label: "Fläche gleichmäßig teilen...", icon: "divide" },
  ],
  [{ label: "Schwerpunkt und Infos...", icon: "centroid" }],
  [
    { label: "Verschieben/Kopieren...", icon: "move" },
    { label: "Rotieren...", icon: "rotate" },
    { label: "Spiegeln...", icon: "mirror" },
  ],
  [{ label: "Lokale Achsensysteme ein/aus", checked: true }],
  [{ label: "Ergebniswerte", sub: true }],
  [{ label: "Anzeigeeigenschaften...", icon: "display" }],
  [
    { label: "Sichtbarkeit mittels selektierter Objekte", icon: "visibility" },
    { label: "Sichtbarkeit mittels Ausblenden von selektierten Objekten", icon: "visibilityOff" },
  ],
];

const MenuEntry = ({ entry }: { entry: Entry }) => (
  <button
    type="button"
    role="menuitem"
    disabled={entry.disabled}
    className={clsx(
      "relative flex h-[14px] w-full items-center text-left whitespace-nowrap",
      entry.disabled ? "text-[#a3a3a3]" : "text-[#3f444c]",
      entry.active && "bg-linear-to-b from-[#fff6cf] via-[#ffdc66] to-[#ffe993]"
    )}
  >
    <span className="flex w-4 shrink-0 justify-center">
      {entry.icon && (
        <Icon name={entry.icon} className={clsx("size-[11px]", entry.disabled && "opacity-60")} />
      )}
      {entry.checked && (
        <svg viewBox="0 0 13 13" className="size-[13px]">
          <path d="M.5.5h12v12H.5z" fill="#ffdf9c" stroke="#e0ac55" />
          <path d="M4 6l2 3.5L9 3" fill="none" stroke="#27357c" strokeWidth="1.3" />
        </svg>
      )}
    </span>
    <span className="ml-[3px] grow">{entry.label}</span>
    {entry.sub && (
      <svg viewBox="0 0 3 5" className="mr-[3px] h-[5px] w-[3px]">
        <path d="M0 0l3 2.5L0 5z" fill="#222" />
      </svg>
    )}
    {entry.active && (
      <span className="pointer-events-none absolute -inset-y-px -left-[3px] w-[133px] border-2 border-[#e03a34]" />
    )}
  </button>
);

const ContextMenu = () => (
  <div
    role="menu"
    className="absolute top-[128px] left-[289px] w-[241px] border border-[#9a9da3] bg-[#fafafa] bg-linear-to-r from-[#e9edf6] from-[17px] to-[#fafafa] to-[17px] text-[7px] leading-[14px] shadow-[1px_1px_2px_rgba(0,0,0,0.35)]"
  >
    {groups.map((group, i) => (
      <React.Fragment key={i}>
        {i > 0 && <hr className="my-[2px] ml-5 border-[#cfd1d4]" />}
        {group.map((entry) => (
          <MenuEntry key={entry.label} entry={entry} />
        ))}
      </React.Fragment>
    ))}
  </div>
);

/* ---------- window ---------- */

export default () => {
  return (
    <div className="flex h-screen flex-col overflow-hidden bg-white font-['Open_Sans',sans-serif] font-medium">
      <header className="flex h-[15px] shrink-0 items-center">
        <svg viewBox="0 0 10 10" className="mr-[3px] ml-px size-[10px]">
          <path d="M0 4l5-4 5 2-1 5-4 3-4-2z" fill="#4a6ea9" stroke="#24406e" strokeWidth=".6" />
          <path d="M1 4l4-3 1 4-3 3z" fill="#e9c440" />
          <path d="M6 3l3 1-1 4-2-1z" fill="#bed3f2" />
        </svg>
        <h1 className="text-[7px] text-black">RFEM 5.24.02 x64 - [Modell Flächenachsen*]</h1>
      </header>
      <MenuBar />
      <Toolbar tools={fileTools} label="Standard" />
      <Toolbar tools={modelTools} label="Modell" />
      <div className="relative flex min-h-0 grow border-t border-[#9298a3]">
        <Navigator />
        <main className="relative min-w-0 grow overflow-hidden border-t border-l border-[#7f838b] bg-white">
          <ResultSurface />
          <p className="absolute top-[3px] left-[2px] font-['Liberation_Sans',sans-serif] text-[7px] leading-[9px] text-[#111]">
            Grundschnittgrößen m-x [kNm/m]
            <br />
            LF1
          </p>
          <ContextMenu />
        </main>
        {/* callout arrow from the tree entry to the local axes */}
        <svg viewBox="170 130 110 40" className="pointer-events-none absolute top-[67px] left-[170px] h-[40px] w-[110px]">
          <path d="M176 140l84 23" stroke="#000" strokeOpacity=".25" strokeWidth="2" />
          <path d="M175 138l84 23" stroke="#e8443f" strokeWidth="2" />
          <path d="M269 163l-12 3 2.5-10z" fill="#e8443f" />
        </svg>
      </div>
    </div>
  );
};
